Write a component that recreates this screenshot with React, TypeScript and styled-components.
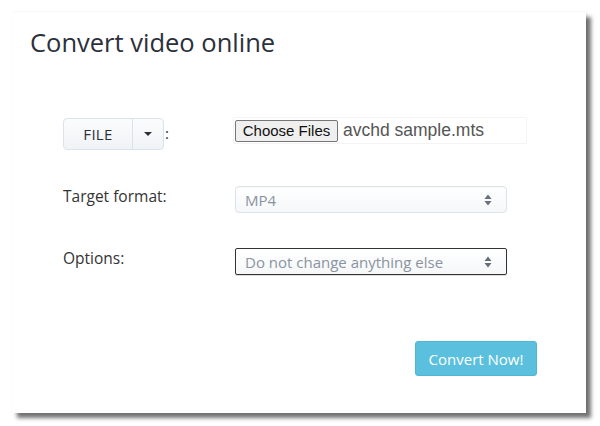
import styled, { createGlobalStyle } from 'styled-components';

const Global = createGlobalStyle`
  html, body { margin: 0; padding: 0; background: #fff; }
  body { font-family: "Open Sans", "Liberation Sans", sans-serif; }
`;

const Page = styled.div`
  width: 600px;
  height: 426px;
  padding: 12px 0 0 12px;
  box-sizing: border-box;
`;

const Panel = styled.div`
  width: 574px;
  height: 401px;
  background: #fff;
  box-shadow: 1px 0 2px rgba(0,0,0,0.08), 5px 5px 4px rgba(0,0,0,0.55);
  box-sizing: border-box;
  padding: 13px 18px 0 18px;
  display: flex;
  flex-direction: column;
`;

const Title = styled.h1`
  margin: 0;
  font-size: 25.5px;
  line-height: 34px;
  font-weight: 400;
  color: #2b303b;
`;

const Form = styled.div`
  margin: 59px 0 0 33px;
  display: grid;
  grid-template-columns: 172px 1fr;
`;

const Label = styled.div<{ $h: number }>`
  height: ${p => p.$h}px;
  font-size: 15.5px;
  line-height: 21px;
  color: #333;
`;

const Field = styled.div<{ $h: number }>`
  height: ${p => p.$h}px;
  display: flex;
  align-items: flex-start;
`;

const Split = styled.div`
  display: flex;
  height: 30px;
  border: 1px solid #dbe3ea;
  border-radius: 4px;
  background: linear-gradient(#fbfcfd, #f0f3f6);
  overflow: hidden;
`;

const SplitMain = styled.div`
  width: 68px;
  display: flex;
  align-items: center;
  justify-content: center;
  font-size: 15px;
  color: #2b303b;
  letter-spacing: 0.3px;
  border-right: 1px solid #dbe3ea;
`;

const SplitCaret = styled.div`
  width: 30px;
  display: flex;
  align-items: center;
  justify-content: center;
  &::after {
    content: '';
    border-left: 4px solid transparent;
    border-right: 4px solid transparent;
    border-top: 4px solid #2b303b;
  }
`;

const Colon = styled.span`
  margin-left: 1px;
  font-size: 15px;
  color: #333;
  line-height: 30px;
`;

const FileBox = styled.div`
  margin: -1px 0 0 -2px;
  width: 294px;
  height: 27px;
  border: 1px solid #f3f4f6;
  display: flex;
  align-items: center;
  padding-left: 1px;
  box-sizing: border-box;
`;

const ChooseBtn = styled.div`
  height: 22px;
  width: 103px;
  box-sizing: border-box;
  border: 1px solid #767676;
  border-radius: 2px;
  background: #efefef;
  font-family: "Liberation Sans", Arial, sans-serif;
  font-size: 15px;
  color: #111;
  display: flex;
  align-items: center;
  justify-content: center;
`;

const FileName = styled.span`
  margin-left: 5px;
  font-family: "Liberation Sans", Arial, sans-serif;
  font-size: 17.5px;
  color: #555;
`;

const Select = styled.div<{ $focus?: boolean }>`
  width: 272px;
  height: 27px;
  box-sizing: border-box;
  border: 1px solid ${p => (p.$focus ? '#333' : '#dbe3ea')};
  border-radius: ${p => (p.$focus ? '2px' : '4px')};
  background: linear-gradient(#fff, #f5f7f9);
  box-shadow: ${p => (p.$focus ? '0 1px 1px rgba(0,0,0,0.15)' : 'inset 0 1px 1px rgba(0,0,0,0.03)')};
  padding: 0 14px 0 9px;
  display: flex;
  align-items: center;
  justify-content: space-between;
  font-size: 15px;
  color: #8a949e;
`;

const Arrows = () => (
  <svg width="8" height="12" viewBox="0 0 8 12">
    <path d="M4 0.5 L7.5 5 L0.5 5 Z" fill="#666e78" />
    <path d="M4 11.5 L7.5 7 L0.5 7 Z" fill="#666e78" />
  </svg>
);

const Footer = styled.div`
  display: flex;
  justify-content: flex-end;
  padding-right: 31px;
  margin-top: 66px;
`;

const ConvertBtn = styled.div`
  width: 122px;
  height: 35px;
  box-sizing: border-box;
  background: #5bc0de;
  border: 1px solid #4fb7d6;
  border-radius: 3px;
  color: #fff;
  font-size: 15px;
  display: flex;
  align-items: center;
  justify-content: center;
`;

export default function App() {
  return (
    <Page>
      <Global />
      <Panel>
        <Title>Convert video online</Title>
        <Form>
          <Field $h={68}>
            <Split>
              <SplitMain>FILE</SplitMain>
              <SplitCaret />
            </Split>
            <Colon>:</Colon>
          </Field>
          <Field $h={68}>
            <FileBox>
              <ChooseBtn>Choose Files</ChooseBtn>
              <FileName>avchd sample.mts</FileName>
            </FileBox>
          </Field>
          <Label $h={62}>Target format:</Label>
          <Field $h={62}>
            <Select>
              <span>MP4</span>
              <Arrows />
            </Select>
          </Field>
          <Label $h={27}>Options:</Label>
          <Field $h={27}>
            <Select $focus>
              <span>Do not change anything else</span>
              <Arrows />
            </Select>
          </Field>
        </Form>
        <Footer>
          <ConvertBtn>Convert Now!</ConvertBtn>
        </Footer>
      </Panel>
    </Page>
  );
}
